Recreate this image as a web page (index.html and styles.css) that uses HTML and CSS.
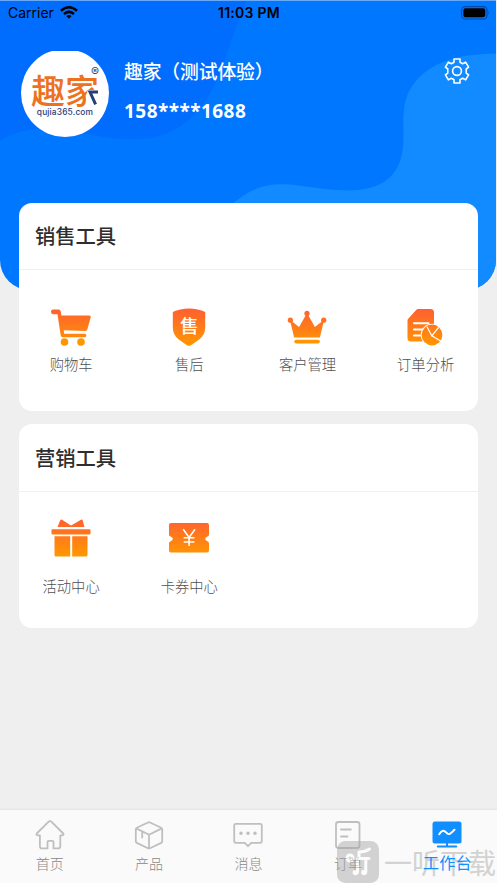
FILE: index.html
```html
<!DOCTYPE html>
<html lang="zh-CN">
<head>
<meta charset="utf-8">
<meta name="viewport" content="width=device-width, initial-scale=1">
<title>工作台</title>
<link rel="stylesheet" href="styles.css">
</head>
<body>
<div class="app">
  <header class="hero">
    <svg class="hero-waves" viewBox="0 0 496 290" preserveAspectRatio="none" aria-hidden="true">
      <path fill="#006dff" d="M0 0H247C234 30 226 57 217 78C202 116 174 139 134 139C96 139 77 128 48 128C29 128 13 132 0 140Z"/>
      <path fill="#118bff" d="M496 53C462 53 439 59 421 75C395 99 407 127 402 153C398 174 384 190 348 190C318 190 302 184 282 184C257 184 243 194 225 210V290H496Z"/>
    </svg>
    <div class="status">
      <div class="carrier"><span>Carrier</span>
        <svg width="18" height="13" viewBox="0 0 18 13" fill="none" stroke="#000"><path stroke-width="2.5" d="M.9 4.8Q9-2.2 17.1 4.8M4 8Q9 3.8 14 8"/><path fill="#000" stroke="none" d="M6.3 10Q9 7.8 11.7 10L9 12.8Z"/></svg>
      </div>
      <div class="time">11:03 PM</div>
      <svg class="battery" width="29" height="14" viewBox="0 0 29 14"><rect x=".6" y=".6" width="25.4" height="12.4" rx="3.6" fill="none" stroke="#0049a8" stroke-width="1.1"/><rect x="2.4" y="2.3" width="21.8" height="9" rx="2" fill="#000"/><path d="M27.4 4.8Q29 6.8 27.4 8.8Z" fill="#0049a8"/></svg>
    </div>
    <div class="profile">
      <div class="avatar">
        <div class="brand"><span>趣</span><span>家</span></div>
        <svg class="brand-accent" width="13" height="17" viewBox="0 0 13 17"><path d="M2 0H13V17H0V5Z" fill="#fff"/><path d="M12 2H4L9.6 14.4" fill="none" stroke="#263d79" stroke-width="3"/></svg>
        <span class="reg">®</span>
        <span class="domain">qujia365.com</span>
      </div>
      <div class="identity"><h1>趣家（测试体验）</h1><p>158****1688</p></div>
      <svg class="gear" width="26" height="26" viewBox="0 0 26 26" fill="none" stroke="#fff" stroke-width="1.6" stroke-linejoin="round"><path d="M10 1H16V4.3L18.6 5.7L21.6 4.2L24.6 9.2L22.2 11V15L24.6 16.8L21.6 21.8L18.6 20.3L16 21.7V25H10V21.7L7.4 20.3L4.4 21.8L1.4 16.8L3.8 15V11L1.4 9.2L4.4 4.2L7.4 5.7L10 4.3Z"/><circle cx="13" cy="13" r="4.4"/></svg>
    </div>
  </header>

  <main>
    <section class="card sales">
      <h2>销售工具</h2>
      <div class="tools">
        <div class="tool">
          <svg viewBox="0 0 42 42"><defs><linearGradient id="warm" gradientUnits="userSpaceOnUse" x1="0" y1="3" x2="0" y2="39"><stop stop-color="#ff622f"/><stop offset="1" stop-color="#ff9800"/></linearGradient></defs><path fill="url(#warm)" fill-rule="evenodd" d="M3 2.5H8.5Q10.4 2.5 10.8 4.6L11.3 8.5H39Q41.2 8.5 40.6 10.7L37.3 22.6Q36.9 24 35.3 24.1L13.7 23.3L14.2 26.8H34.8Q36.4 26.9 36.4 28.5Q36.4 30.3 34.8 30.3H12.7Q11 30.3 10.7 28.6L7.5 7.2H3Q1 7.2 1 4.8Q1 2.5 3 2.5Z"/><circle cx="14.5" cy="35" r="3.8" fill="#ff9600"/><circle cx="31" cy="35" r="3.8" fill="#ff9600"/></svg>
          <span>购物车</span>
        </div>
        <div class="tool">
          <svg viewBox="0 0 42 42"><path fill="url(#warm)" d="M21 1.5Q30 1.5 37.2 5V20.5Q37.2 27.6 31.5 32.2L23.5 38Q21 39.7 18.5 38L10.5 32.2Q4.8 27.6 4.8 20.5V5Q12 1.5 21 1.5Z"/><text class="shield-text" x="21.3" y="25.8" text-anchor="middle">售</text></svg>
          <span>售后</span>
        </div>
        <div class="tool">
          <svg viewBox="0 0 42 42"><path fill="url(#warm)" d="M3.9 12.8L13.1 20L20 7.8H22L28.9 20L38.1 12.8L33.9 30.5H8.1Z"/><path fill="#ff9500" d="M10.2 32.7H31.8Q33.8 32.7 33.8 34.6Q33.8 36.5 31.8 36.5H10.2Q8.3 36.5 8.3 34.6Q8.3 32.7 10.2 32.7Z"/><g fill="url(#warm)"><circle cx="4.4" cy="13.2" r="2.6"/><circle cx="21" cy="6.4" r="2.6"/><circle cx="37.7" cy="13.2" r="2.6"/></g></svg>
          <span>客户管理</span>
        </div>
        <div class="tool">
          <svg viewBox="0 0 42 42"><path fill="url(#warm)" d="M13 2H25.5Q29 2 29 5.5V34.5H6Q2.5 34.5 2.5 31V13.5Q2.5 12.5 3.2 11.8L11.4 2.7Q12 2 13 2Z"/><path d="M9 16.2H23.5M9 22.5H18M9 28.5H15" stroke="#fff" stroke-width="2" stroke-linecap="round"/><circle cx="27" cy="28" r="11.3" fill="#fff"/><circle cx="27" cy="28" r="10.4" fill="url(#warm)"/><path d="M22 19.8L26.8 28.8L33.5 20.5M26.8 28.8L36 34.2" stroke="#fff" stroke-width="1.2" fill="none"/></svg>
          <span>订单分析</span>
        </div>
      </div>
    </section>
    <section class="card marketing">
      <h2>营销工具</h2>
      <div class="tools">
        <div class="tool">
          <svg viewBox="0 0 42 42"><g fill="url(#warm)"><path d="M7.5 10L10.2 3.2Q10.8 2 12 2.7L21 8.6L31 2.7Q32 2 32.6 3.2L34.5 10Z"/><rect x="1.5" y="12.2" width="39" height="5.2" rx=".8"/><path d="M4.5 19.3H20.2V39.5H6Q4.5 39.5 4.5 38ZM22.2 19.3H37.5V38Q37.5 39.5 36 39.5H22.2Z"/></g></svg>
          <span>活动中心</span>
        </div>
        <div class="tool">
          <svg viewBox="0 0 42 42"><path fill="url(#warm)" d="M3 6H39Q41 6 41 8V18Q41 18.7 39.8 19.3Q34.5 22 39.8 24.6Q41 25.2 41 26.5V33.5Q41 35.5 39 35.5H3Q1 35.5 1 33.5V26.5Q1 25.2 2.2 24.6Q7.5 22 2.2 19.3Q1 18.7 1 18V8Q1 6 3 6Z"/><path d="M15.2 12.3L21.1 20.5L27 12.3M21.1 20.5V29M15.7 20.7H26.5M15.7 25H26.5" fill="none" stroke="#fff" stroke-width="1.6"/></svg>
          <span>卡券中心</span>
        </div>
      </div>
    </section>
  </main>

  <nav class="tabs">
    <a><svg viewBox="0 0 30 30"><path d="M13.4 1.8Q15 .6 16.6 1.8L28.2 13.5Q29.2 15 27.3 15.4H25.3V26.2Q25.3 28.4 23.1 28.4H18.5V22Q18.5 20.8 17.3 20.8H13.7Q12.5 20.8 12.5 22V28.4H7Q4.9 28.4 4.9 26.2V15.4H2.7Q.8 15 1.8 13.5Z"/></svg><span>首页</span></a>
    <a><svg viewBox="0 0 30 30"><path d="M14 2.5Q15 2 16 2.5L27.2 7.7Q28.2 8.2 28.2 9.3V21.2Q28.2 22.3 27.2 22.9L16 28.2Q15 28.7 14 28.2L2.8 22.9Q1.8 22.3 1.8 21.2V9.3Q1.8 8.2 2.8 7.7ZM2.3 8.4L15 14.7L27.7 8.4M15 14.7V28M8.2 11.6V17.5"/></svg><span>产品</span></a>
    <a><svg viewBox="0 0 30 30"><path d="M3 3.8H27Q28.8 3.8 28.8 5.6V21Q28.8 22.8 27 22.8H18.3L15 26.2L11.7 22.8H3Q1.2 22.8 1.2 21V5.6Q1.2 3.8 3 3.8Z"/><g class="dots"><circle cx="8" cy="13.2" r="1.7"/><circle cx="15" cy="13.2" r="1.7"/><circle cx="22" cy="13.2" r="1.7"/></g></svg><span>消息</span></a>
    <a><svg viewBox="0 0 30 30"><rect x="3" y="2" width="23.5" height="26" rx="2.4"/><path d="M8 9.5H17.8M8 16.5H14.5"/></svg><span>订单</span></a>
    <a class="active"><svg viewBox="0 0 30 30"><rect class="screen" x=".5" y="1.5" width="29" height="22" rx="2.5"/><path class="line" d="M7.2 14.2Q10.2 9.2 13 11.6L15.4 13.6Q17.4 15.5 22.5 9.7"/><path class="stand" d="M15 23V26.5M5.8 26.6H24.2"/></svg><span>工作台</span></a>
  </nav>
  <div class="watermark" aria-hidden="true">
    <svg width="42" height="42" viewBox="0 0 42 42"><rect width="42" height="42" rx="8.5" fill="#a6a6a6"/><g fill="none" stroke="#fff" stroke-width="3" stroke-linecap="round"><circle cx="13" cy="17" r="3"/><path d="M20.5 18V31M22 11Q28 11 32.5 8M22 11V17.5H32M28.8 18V31"/></g><circle cx="18.5" cy="31.5" r="2.8" fill="#fff"/><circle cx="27" cy="31.5" r="2.8" fill="#fff"/></svg>
    <span>一听下载</span>
  </div>
</div>
</body>
</html>
```

FILE: styles.css
```css
* { box-sizing: border-box; }
body { margin: 0; background: #efefef; font-family: "Noto Sans CJK SC", sans-serif; }
h1, h2, p { margin: 0; }
svg { display: block; flex: none; }
.app { position: relative; height: 883px; overflow: hidden; display: flex; flex-direction: column; }
.hero { position: relative; flex: none; width: 496px; height: 290px; background: #0077ff; border-radius: 0 0 30px 30px; overflow: hidden; border-top: 1px solid #69a9f7; }
.hero-waves { position: absolute; inset: 0; width: 100%; height: 100%; }
.status { position: relative; display: grid; grid-template-columns: 1fr auto 1fr; align-items: center; height: 23px; padding: 0 6px 0 8px; font: 14px/23px Inter, sans-serif; color: #000; }
.carrier { display: flex; align-items: center; gap: 6px; }
.time { font-weight: 600; font-size: 14px; letter-spacing: .25px; }
.battery { justify-self: end; }
.profile { position: relative; display: flex; align-items: flex-start; padding: 26px 26px 0 21px; }
.avatar { position: relative; width: 88px; height: 88px; flex: none; border-radius: 50%; background: #fff; clip-path: inset(2px 0 0 0); margin-top: -1px; text-align: center; }
.brand { display: flex; justify-content: center; padding-top: 22px; color: #ed711f; font-size: 34px; line-height: 38px; font-weight: 500; }
.brand-accent { position: absolute; left: 65px; top: 41px; }
.reg { position: absolute; left: 70px; top: 17px; font: 12px/12px Inter, sans-serif; color: #263d79; }
.domain { display: block; margin-top: -3px; font: 500 8.4px/12px Inter, sans-serif; letter-spacing: .15px; color: #263d79; }
.identity { flex: 1; padding-left: 15px; color: #fff; }
.identity h1 { margin-top: 7px; font-size: 18.8px; line-height: 28px; font-weight: 500; white-space: nowrap; letter-spacing: -.1px; }
.identity p { margin-top: 13px; font: 700 19px/26px "Noto Sans", sans-serif; letter-spacing: .45px; }
.gear { margin: 8px 0 0; }
main { position: relative; margin: -87px 19px 0; display: flex; flex-direction: column; gap: 13px; }
.card { background: #fff; border-radius: 13px; }
.sales { height: 208px; }
.marketing { height: 204px; }
.card h2 { height: 67px; padding-left: 16px; font-size: 20.3px; line-height: 65px; font-weight: 500; color: #2e2e2e; border-bottom: 1px solid #f0f0f0; }
.card.marketing h2 { height: 68px; line-height: 66px; }
.tools { display: grid; grid-template-columns: repeat(4, 118.2px); margin-left: -7px; padding-top: 37px; }
.marketing .tools { padding-top: 25px; }
.tool { display: flex; flex-direction: column; align-items: center; color: #505050; font-size: 14.3px; line-height: 20px; font-weight: 300; }
.tool svg { width: 42px; height: 42px; }
.tool span { margin-top: 5px; }
.marketing .tool span { margin-top: 17px; }
.shield-text { font-size: 18.5px; font-weight: 500; fill: #fff; }
.tabs { display: grid; grid-template-columns: repeat(5, 1fr); margin-top: auto; height: 73px; background: #fafafa; box-shadow: 0 -1px 2px #e2e2e2; padding-top: 10px; }
.tabs a { display: flex; flex-direction: column; align-items: center; color: #888; font-size: 14px; line-height: 20px; font-weight: 300; }
.tabs svg { width: 30px; height: 30px; fill: none; stroke: #bfbfbf; stroke-width: 1.8; stroke-linejoin: round; stroke-linecap: round; }
.tabs span { margin-top: 3px; }
.tabs .dots { fill: #bfbfbf; stroke: none; }
.tabs .active { position: relative; z-index: 1; color: #118eff; font-size: 16.3px; font-weight: 400; }
.tabs .active span { margin-top: 2px; }
.tabs .screen { fill: #118eff; stroke: none; }
.tabs .line { stroke: #fff; stroke-width: 2; }
.tabs .stand { stroke: #118eff; stroke-width: 2; }
.watermark { position: absolute; left: 337px; top: 841px; display: flex; align-items: center; gap: 5px; opacity: .47; color: #a6a6a6; font-size: 28px; line-height: 42px; white-space: nowrap; }
```
